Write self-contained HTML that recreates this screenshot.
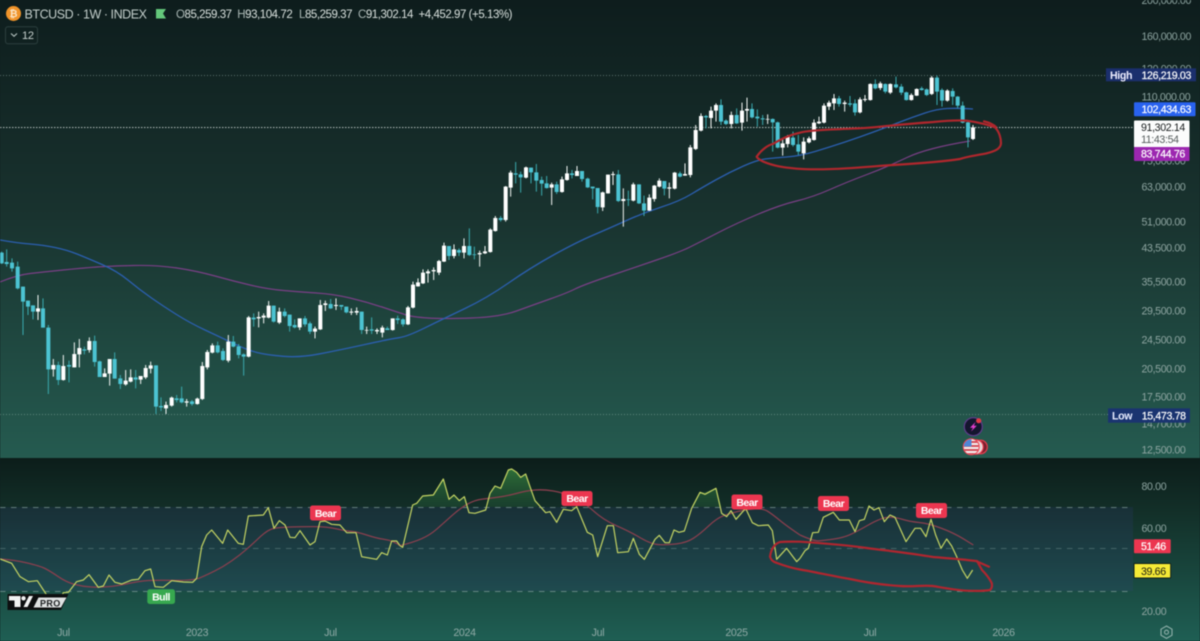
<!DOCTYPE html>
<html><head><meta charset="utf-8"><title>BTCUSD</title>
<style>
html,body{margin:0;padding:0;background:#0f1f1f;width:1200px;height:641px;overflow:hidden}
svg{display:block;position:absolute;left:0;top:0;filter:blur(.4px)}
text{font-family:"Liberation Sans",sans-serif}
</style></head><body>
<svg width="1200" height="641" viewBox="0 0 1200 641" xmlns="http://www.w3.org/2000/svg">
<defs>
<linearGradient id="g1" x1="0" y1="0" x2="0" y2="1"><stop offset="0" stop-color="#0e1d1d"/><stop offset=".47" stop-color="#19332f"/><stop offset="1" stop-color="#255b50"/></linearGradient>
<linearGradient id="g2" x1="0" y1="0" x2="0" y2="1"><stop offset="0" stop-color="#0c1d1a"/><stop offset=".3" stop-color="#133029"/><stop offset="1" stop-color="#1f5f54"/></linearGradient>
<linearGradient id="gf" gradientUnits="userSpaceOnUse" x1="0" y1="468" x2="0" y2="507"><stop offset="0" stop-color="#2f7038"/><stop offset="1" stop-color="#1c4630" stop-opacity=".7"/></linearGradient>
<clipPath id="cu"><circle cx="971.2" cy="446.8" r="7.5"/></clipPath>
</defs>
<rect width="1200" height="458" fill="url(#g1)"/>
<rect y="458" width="1200" height="183" fill="url(#g2)"/>

<!-- price lines -->
<path d="M0 75.5H1106" stroke="#8fa5a2" stroke-width="1" stroke-dasharray="1 2" opacity=".6"/>
<path d="M0 127.5H1134" stroke="#e6ecea" stroke-width="1" stroke-dasharray="1.5 1.5" opacity=".75"/>
<path d="M0 414.5H1108" stroke="#8fb0a8" stroke-width="1" stroke-dasharray="1 2" opacity=".55"/>

<!-- moving averages -->
<path fill="none" stroke="#7a3f86" stroke-width="1.2" d="M0 282Q17 275 30 273.5Q43 272 63 270Q83 268 96.5 267Q110 266 133.5 265.5Q157 265 177 268Q197 271 215 276Q233 281 250 285Q267 289 283.5 290.5Q300 292 316.5 293Q333 294 350 298Q367 302 383.5 307.5Q400 313 406.5 315Q413 317 428 318Q443 319 471.5 318Q500 317 516.5 311Q533 305 550 299Q567 293 575 289Q583 285 608 276.5Q633 268 656.5 260Q680 252 690 247Q700 242 718.5 232.5Q737 223 758.5 214Q780 205 796.5 201Q813 197 830 189.5Q847 182 867 174.5Q887 167 907 157.5Q927 148 970 141"/>
<path fill="none" stroke="#2b5fb0" stroke-width="1.3" d="M0 240Q17 243 30 244Q43 245 55 247.5Q67 250 77 254Q87 258 102 264.5Q117 271 128.5 280.5Q140 290 151.5 298Q163 306 176.5 314.5Q190 323 205 330Q220 337 233.5 343.5Q247 350 257 352.5Q267 355 283.5 356.3Q300 357.7 320 353.8Q340 350 365 344.5Q390 339 398.5 337.8Q407 336.7 425 327.8Q443 319 465 308.5Q487 298 508.5 283Q530 268 553.5 255Q577 242 593.5 235Q610 228 626.5 220.5Q643 213 661.5 207Q680 201 691.5 194Q703 187 716.5 179.5Q730 172 743.5 166Q757 160 765 159Q773 158 786.5 157Q800 156 815 151.5Q830 147 845 142Q860 137 873.5 132Q887 127 900 122Q913 117 925 113Q937 109 947 108.5Q957 108 973 109"/>

<!-- candles group A -->
<g transform="translate(0 230) scale(.33333)" fill="none">
<path stroke="#3aa9ae" stroke-width="3" d="M5 65V102M20 58V110M36 85V125M53 95V178M69 170V315M84 212V255M99 226V268M129 205V293M145 285V492M175 395V465M207 392V457M253 350V373M284 317V410M299 392V441M344 367V446M361 435V477M407 420V475M468 406V552M483 502V543M530 495V517M545 470V520M576 510V527M653 335V370M669 355V393M700 318V352M716 342V385M731 370V437M761 250V290M821 227V278M854 235V262M869 254V305M884 268V295"/>
<path stroke="#4cc3d2" stroke-width="12" d="M5 68V100M20 96V102M36 98V115M53 110V175M69 170V215M84 212V230M99 226V245M129 235V293M145 293V418M175 405V450M207 405V410M253 358V362M284 333V396M299 394V441M344 387V446M361 445V462M407 442V449M468 406V530M483 528V532M530 505V510M545 505V517M576 514V522M653 346V367M669 363V390M700 335V350M716 349V375M731 373V380M761 263V268M821 227V275M854 245V258M869 254V288M884 285V292"/>
<path stroke="#f2f5f3" stroke-width="3" d="M114 195V270M160 387V440M190 375V452M223 337V412M238 327V412M268 322V368M314 415V441M329 387V467M377 420V467M392 418V457M422 438V462M437 405V447M452 395V430M498 515V552M515 500V530M560 507V530M592 503V524M607 396V510M622 360V418M637 340V370M685 315V397M746 258V382M776 245V292M791 250V280M806 213V265M838 233V282M899 265V300"/>
<path stroke="#fff" stroke-width="12" d="M114 235V245M160 405V418M190 408V450M223 372V412M238 354V373M268 333V360M314 430V441M329 387V431M377 452V463M392 442V455M422 438V449M437 414V442M452 406V416M498 525V535M515 503V527M560 514V518M592 506V522M607 408V507M622 366V412M637 346V368M685 335V392M746 262V380M776 261V265M791 257V263M806 227V263M838 245V278M899 265V292"/>
</g>
<!-- candles group B -->
<g transform="translate(300 130) scale(.33333)" fill="none">
<path stroke="#3aa9ae" stroke-width="3" d="M15 558V590M30 575V612M92 507V537M124 525V540M139 530V550M185 545V612M215 562V612M262 590V600M293 557V582M309 565V590M447 348V390M477 355V378M508 295V378M523 350V388M602 258V275M647 96V160M662 125V188M693 113V160M709 102V185M725 140V197M740 138V176M770 155V192M816 120V145M846 123V155M863 143V174M878 170V208M893 174V250M955 120V216M985 182V228M1017 163V222M1032 197V258M1093 153V196"/>
<path stroke="#4cc3d2" stroke-width="12" d="M15 565V583M30 580V605M92 522V535M124 525V530M139 530V547M185 545V600M215 598V602M262 595V600M293 565V570M309 568V583M447 348V378M477 360V368M508 348V375M523 373V375M602 264V270M647 130V134M662 133V142M693 113V127M709 127V152M725 150V161M740 160V174M770 163V186M816 130V135M846 123V147M863 146V172M878 170V175M893 174V231M955 133V213M985 208V210M1017 163V220M1032 220V242M1093 153V176"/>
<path stroke="#f2f5f3" stroke-width="3" d="M45 590V625M61 510V600M76 512V543M108 505V540M154 535V555M170 532V555M200 590V612M231 595V612M247 587V622M278 565V602M324 528V585M339 455V535M354 445V470M369 418V462M384 418V458M401 412V450M417 390V435M432 338V396M462 343V385M492 325V385M539 362V410M555 348V372M571 295V368M586 258V305M617 168V275M632 122V200M678 110V145M755 158V225M786 140V188M801 108V152M831 108V138M908 185V243M924 134V191M939 125V165M970 175V290M1000 158V214M1048 193V243M1063 165V215M1078 145V172M1108 158V205M1124 126V178"/>
<path stroke="#fff" stroke-width="12" d="M45 596V605M61 525V598M76 520V525M108 525V528M154 545V548M170 543V548M200 600V602M231 600V604M247 593V608M278 565V600M324 532V583M339 464V533M354 457V469M369 428V460M384 424V430M401 420V424M417 393V428M432 347V395M462 358V378M492 348V368M539 369V373M555 364V370M571 299V366M586 264V303M617 170V270M632 128V173M678 112V143M755 163V173M786 148V186M801 130V150M831 123V138M908 187V232M924 134V190M939 132V135M970 207V213M1000 163V212M1048 203V242M1063 167V207M1078 152V170M1108 172V176M1124 128V176"/>
</g>
<!-- candles group C -->
<g transform="translate(680 60) scale(.33333)" fill="none">
<path stroke="#3aa9ae" stroke-width="3" d="M0 335V352M78 165V205M123 118V195M138 178V195M170 145V192M216 130V175M232 148V200M248 165V195M278 175V275M293 185V265M339 215V260M355 225V285M477 108V140M510 108V140M525 118V167M586 58V88M616 70V100M648 50V85M664 72V105M679 95V122M725 80V92M740 85V108M771 47V135M786 85V140M818 85V135M833 108V145M848 125V190M864 180V262"/>
<path stroke="#4cc3d2" stroke-width="12" d="M0 340V350M78 168V172M123 135V185M138 182V192M170 165V190M216 147V172M232 170V175M248 175V178M278 177V187M293 187V263M339 233V255M355 253V275M477 115V132M510 130V134M525 130V157M586 72V85M616 72V95M648 73V82M664 80V98M679 97V120M725 85V90M740 88V105M771 53V95M786 90V122M818 93V110M833 110V137M848 137V188M864 187V232"/>
<path stroke="#f2f5f3" stroke-width="3" d="M15 310V347M31 255V352M47 195V270M63 160V214M93 140V205M108 130V185M154 155V205M186 128V212M201 113V185M263 163V192M308 235V287M323 225V262M371 232V298M387 230V250M402 178V242M417 170V192M432 130V190M447 122V150M462 102V150M494 122V155M540 112V160M555 105V125M571 70V122M601 65V90M631 70V102M694 100V122M710 85V108M755 48V105M802 88V125M879 195V240"/>
<path stroke="#fff" stroke-width="12" d="M15 342V347M31 262V345M47 210V267M63 168V212M93 152V174M108 135V152M154 165V192M186 152V188M201 147V152M263 177V179M308 250V263M323 230V252M371 245V280M387 235V247M402 188V240M417 185V190M432 137V188M447 128V140M462 115V130M494 128V132M540 118V157M555 117V120M571 72V120M601 70V84M631 72V98M694 105V120M710 87V107M755 53V102M802 92V122M879 202V237"/>
<!-- hand-drawn ellipse -->
<path stroke="#b0272d" stroke-width="6.5" stroke-linejoin="round" stroke-linecap="round" d="M230 290C245 268 265 255 278 252C300 240 325 225 360 218C380 212 420 210 470 208C520 205 560 205 600 200C650 195 700 190 760 186C800 182 830 180 860 182C890 186 920 193 945 202C958 215 963 235 963 250C962 268 940 275 920 280C890 286 860 290 840 297C790 305 720 310 640 315C590 318 550 322 500 325C450 328 400 330 350 326C310 322 280 318 250 305C240 300 232 295 230 290M912 184C925 187 938 192 948 201"/>
</g>

<!-- RSI panel band -->
<rect x="0" y="507" width="1133" height="84" fill="#3f3e9c" opacity=".14"/>
<path d="M0 507.5H1133M0 591.5H1133" stroke="#94aeab" stroke-width="1" stroke-dasharray="5.5 5.5" opacity=".6"/>
<path d="M0 548.5H1133" stroke="#8aa6a3" stroke-width="1" stroke-dasharray="5.5 5.5" opacity=".38"/>

<!-- green overbought fills -->
<path fill="url(#gf)" d="M411 507L412.7 505L416.7 503.3L422.7 496L433.3 495L443.3 479L449 499.3L454 495L459.3 500.7L464.3 496.7L468 507ZM488 507L490 493.3L495 486L500.7 488.3L508.3 470L511.7 469L516.7 472.3L520.7 477.3L525.7 474L530 486.7L535 500.7L538 507ZM692 507L700 492.3L705 492.3L716 488.3L721.7 507Z"/>
<g transform="translate(0 460) scale(.33333)" fill="none" stroke-linejoin="round">
<path stroke="#8a3f4e" stroke-width="3.8" d="M0 297Q45 300 82 309Q120 318 135 325.5Q150 333 175 350Q200 367 225 373.5Q250 380 275 381Q300 382 325 380Q350 378 385 370.5Q420 363 445 361.5Q470 360 525 361Q580 362 600 353.5Q620 345 645 332.5Q670 320 695 302.5Q720 285 740 267.5Q760 250 782 229Q805 208 822 205Q840 202 870 201Q900 200 940 200Q980 200 1010 206.5Q1040 213 1055 214Q1070 215 1100 225Q1130 235 1155 238.5Q1180 242 1200 257"/>
<path stroke="#c4d463" stroke-width="3.6" d="M0 297L35 310L60 350L85 365L112 362L140 405L160 430L180 420L190 398L205 397L230 365L250 360L267 344L295 382L310 378L327 345L345 367L365 372L395 360L415 358L435 332L452 327L465 380L490 382L515 362L550 366L578 367L590 355L605 260L620 225L635 210L668 250L683 210L715 250L730 253L745 168L790 165L805 143L822 205L838 182L855 195L870 232L885 233L900 212L930 255L945 245L960 185L975 183L995 193L1020 195L1040 218L1068 218L1085 290L1130 298L1145 278L1162 285L1175 243L1190 243L1200 257"/>
</g>
<g transform="translate(400 460) scale(.33333)" fill="none" stroke-linejoin="round">
<path stroke="#8a3f4e" stroke-width="3.8" d="M0 257Q40 247 65 236Q90 225 110 207.5Q130 190 155 167.5Q180 145 202 132.5Q225 120 247 117.5Q270 115 295 111.5Q320 108 350 100Q380 92 405 90Q430 88 460 93Q490 98 520 111.5Q550 125 580 152.5Q610 180 650 197.5Q690 215 722 234Q755 253 777 254Q800 255 830 251.5Q860 248 880 235Q900 222 925 198.5Q950 175 970 167.5Q990 160 1015 154Q1040 148 1065 146.5Q1090 145 1105 155Q1120 165 1140 181.5Q1160 198 1200 225"/>
<path stroke="#c4d463" stroke-width="3.6" d="M0 257L8 262L38 135L50 130L68 108L100 105L130 57L147 118L162 105L178 122L193 110L207 158L225 160L257 150L270 100L285 78L302 85L325 30L335 27L350 37L362 52L377 42L390 80L405 122L437 158L450 155L470 187L490 148L515 152L530 140L562 217L578 225L593 290L622 197L640 197L653 278L685 275L700 235L718 283L733 298L765 238L778 226L795 248L808 248L822 210L837 217L853 213L875 145L900 97L915 103L948 85L965 160L980 170L993 152L1008 178L1037 145L1057 188L1075 197L1105 195L1117 212L1130 298L1160 265L1190 305L1200 295"/>
</g>
<g transform="translate(800 460) scale(.33333)" fill="none" stroke-linejoin="round">
<path stroke="#8a3f4e" stroke-width="3.8" d="M0 225Q40 243 55 242.5Q70 242 100 237.5Q130 233 150 224Q170 215 205 195Q240 175 260 172.5Q280 170 305 177.5Q330 185 357 187.5Q385 190 422 204Q460 218 490 236.5L520 255"/>
<path stroke="#c4d463" stroke-width="3.6" d="M0 295L15 272L25 265L38 218L55 217L70 172L100 157L118 180L148 180L165 215L178 182L193 178L207 138L222 150L237 143L253 185L270 165L285 172L318 245L345 205L362 205L378 230L393 178L407 225L423 265L440 237L455 258L470 290L487 330L502 355L518 330"/>
</g>
<!-- second hand-drawn ellipse -->
<path fill="none" stroke="#b0262f" stroke-width="2.2" stroke-linejoin="round" stroke-linecap="round" d="M989 566.7L976 561C960 559 945 558 933 557C910 553 890 551 866.7 548C845 545 820 543 800 541.7C790 541.5 785 541.5 780 542C774 544 771 550 770 556.7C771 560 773 562 777 563C785 566 792 568 800 569.5C815 572 832 576 850 579C868 583 885 585 900 586C912 587 922 585 933 586C945 588 955 590 967 590.7C975 591 985 591 990 590C993 587 992 583 991 581.7C989 578 985 573 982 570L977 561"/>

<!-- labels on RSI -->
<g font-size="10.5" font-weight="700" fill="#fff" text-anchor="middle" letter-spacing="-.5">
<rect x="310" y="505.5" width="31" height="15" rx="2.5" fill="#ec3650"/><text x="325.5" y="516.8">Bear</text>
<rect x="561.5" y="491" width="31" height="15" rx="2.5" fill="#ec3650"/><text x="577" y="502.2">Bear</text>
<rect x="731.5" y="494.5" width="31" height="15" rx="2.5" fill="#ec3650"/><text x="747" y="505.8">Bear</text>
<rect x="818" y="496" width="31" height="15" rx="2.5" fill="#ec3650"/><text x="833.5" y="507.2">Bear</text>
<rect x="916" y="503" width="31" height="15" rx="2.5" fill="#ec3650"/><text x="931.5" y="514.2">Bear</text>
<rect x="147.3" y="589.3" width="27.7" height="14.7" rx="2.5" fill="#37a84f"/><text x="161" y="600.5">Bull</text>
</g>

<!-- TV PRO logo -->
<path fill="#0d0f10" d="M7.5 594H68.5L61 610H7.5Z"/>
<path fill="#f1f2f2" d="M9 596H20.5V607H14.5V600.5H9Z"/>
<circle cx="23.5" cy="598.3" r="2.2" fill="#f1f2f2"/>
<path fill="#f1f2f2" d="M23.5 607L29 596H33L27.5 607Z"/>
<path fill="#dfe2e2" d="M33.5 607.5L38.5 597.5H66.5L61 607.5Z"/>
<text x="40" y="606.3" font-size="9" font-weight="700" fill="#1b1d1f" letter-spacing=".4">PRO</text>

<!-- indicator icons -->
<circle cx="973.3" cy="426.7" r="9" fill="#14152e" stroke="#5f3c8c" stroke-width="1.2"/>
<path fill="#e23ecf" d="M975.5 422L970 427.8H973L971 431.5L976.8 425.8H973.8Z"/>
<circle cx="978.7" cy="420.7" r="2.6" fill="#e2384a"/>
<circle cx="980.5" cy="447" r="6.8" fill="#7a2030" stroke="#ee3d4e" stroke-width="1.1"/>
<circle cx="976" cy="447" r="7.2" fill="#e9d6d8" stroke="#ee3d4e" stroke-width="1.1"/>
<circle cx="971.2" cy="446.8" r="8.5" fill="#ee3d4e"/>
<g clip-path="url(#cu)">
<rect x="963" y="439" width="16" height="16" fill="#f3eeee"/>
<path d="M963 442H980M963 446H980M963 450H980M963 454H980" stroke="#cf3c4a" stroke-width="1.8"/>
<rect x="963" y="439" width="8.5" height="7.5" fill="#4f86d6"/>
</g>

<!-- y axis -->
<g font-size="10.6" letter-spacing="-.35" fill="#8ea5a1">
<text x="1141.5" y="4">200,000.00</text>
<text x="1141.5" y="40">160,000.00</text>
<text x="1141.5" y="72.5">120,000.00</text>
<text x="1141.5" y="100.5">110,000.00</text>
<text x="1141.5" y="164.5">75,000.00</text>
<text x="1141.5" y="190.5">63,000.00</text>
<text x="1141.5" y="225.5">51,000.00</text>
<text x="1141.5" y="251.5">43,500.00</text>
<text x="1141.5" y="285.5">35,500.00</text>
<text x="1141.5" y="314.5">29,500.00</text>
<text x="1141.5" y="343.5">24,500.00</text>
<text x="1141.5" y="372.5">20,500.00</text>
<text x="1141.5" y="400.5">17,500.00</text>
<text x="1141.5" y="427.5">14,700.00</text>
<text x="1141.5" y="453.5">12,500.00</text>
<text x="1141.5" y="490">80.00</text>
<text x="1141.5" y="532">60.00</text>
<text x="1141.5" y="615">20.00</text>
</g>
<rect x="1106" y="68.3" width="90" height="13" fill="#1b2f6d"/>
<rect x="1134" y="102.3" width="61.5" height="14" rx="1" fill="#2962ef"/>
<rect x="1134" y="120.5" width="55.5" height="27" rx="1" fill="#fbfcfc"/>
<rect x="1134" y="147" width="55.5" height="14" rx="1" fill="#9c27b0"/>
<rect x="1108" y="408.3" width="82" height="14.4" fill="#1a3470"/>
<rect x="1134" y="539.3" width="36.7" height="14" rx="1" fill="#ec3650"/>
<rect x="1134" y="563.5" width="36.7" height="14.5" rx="1" fill="#f6ea36" stroke="#12201c"/>
<g font-size="10.6" letter-spacing="-.35">
<text x="1110" y="79" font-weight="700" fill="#eef">High</text>
<text x="1141.5" y="79" fill="#fff" stroke="#fff" stroke-width=".2">126,219.03</text>
<text x="1141.5" y="113.2" fill="#fff" stroke="#fff" stroke-width=".2">102,434.63</text>
<text x="1141" y="131" fill="#15191a">91,302.14</text>
<text x="1141" y="143" fill="#555c5c">11:43:54</text>
<text x="1141" y="157.6" fill="#fff" stroke="#fff" stroke-width=".2">83,744.76</text>
<text x="1112" y="419.5" font-weight="700" fill="#e6ecff">Low</text>
<text x="1141.7" y="419.5" fill="#fff" stroke="#fff" stroke-width=".2">15,473.78</text>
<text x="1141" y="550.2" fill="#fff" stroke="#fff" stroke-width=".2">51.46</text>
<text x="1141" y="574.8" fill="#1a1c10">39.66</text>
</g>

<!-- time axis -->
<g font-size="10.6" letter-spacing="-.3" fill="#8faaa6" text-anchor="middle">
<text x="63.5" y="635.8">Jul</text>
<text x="197" y="635.8">2023</text>
<text x="330.5" y="635.8">Jul</text>
<text x="464.5" y="635.8">2024</text>
<text x="598" y="635.8">Jul</text>
<text x="736.5" y="635.8">2025</text>
<text x="870" y="635.8">Jul</text>
<text x="1003.5" y="635.8">2026</text>
</g>
<path fill="none" stroke="#8fb0aa" stroke-width="1.1" d="M1166.5 626L1172 629.2V635.2L1166.5 638.4L1161 635.2V629.2Z"/>
<circle cx="1166.5" cy="632.2" r="2" fill="none" stroke="#8fb0aa" stroke-width="1.1"/>

<!-- header -->
<circle cx="13.5" cy="13.5" r="7.5" fill="#f0942a"/>
<text x="13.5" y="17" font-size="10" font-weight="700" fill="#fbe6c8" text-anchor="middle">₿</text>
<text x="24.5" y="18.3" font-size="12.5" letter-spacing="-.45" fill="#c3cecb">BTCUSD · 1W · INDEX</text>
<path fill="#64c77b" d="M156 9H166L163 13.5L166 18.5H156Z"/>
<g font-size="11.5" letter-spacing="-.45" fill="#d8e0dd">
<text x="176" y="18"><tspan fill="#a7b5b2">O</tspan>85,259.37</text>
<text x="237.3" y="18"><tspan fill="#a7b5b2">H</tspan>93,104.72</text>
<text x="299" y="18"><tspan fill="#a7b5b2">L</tspan>85,259.37</text>
<text x="358" y="18"><tspan fill="#a7b5b2">C</tspan>91,302.14</text>
<text x="418.5" y="18">+4,452.97 (+5.13%)</text>
</g>
<rect x="5.5" y="26.7" width="32" height="17" rx="2.5" fill="none" stroke="#2c3f3e"/>
<path fill="none" stroke="#b9c6c3" stroke-width="1.1" d="M11 33.5L14 36.3L17 33.5"/>
<text x="22" y="39.2" font-size="11" letter-spacing="-.2" fill="#c8d2cf">12</text>
</svg>
</body></html>
